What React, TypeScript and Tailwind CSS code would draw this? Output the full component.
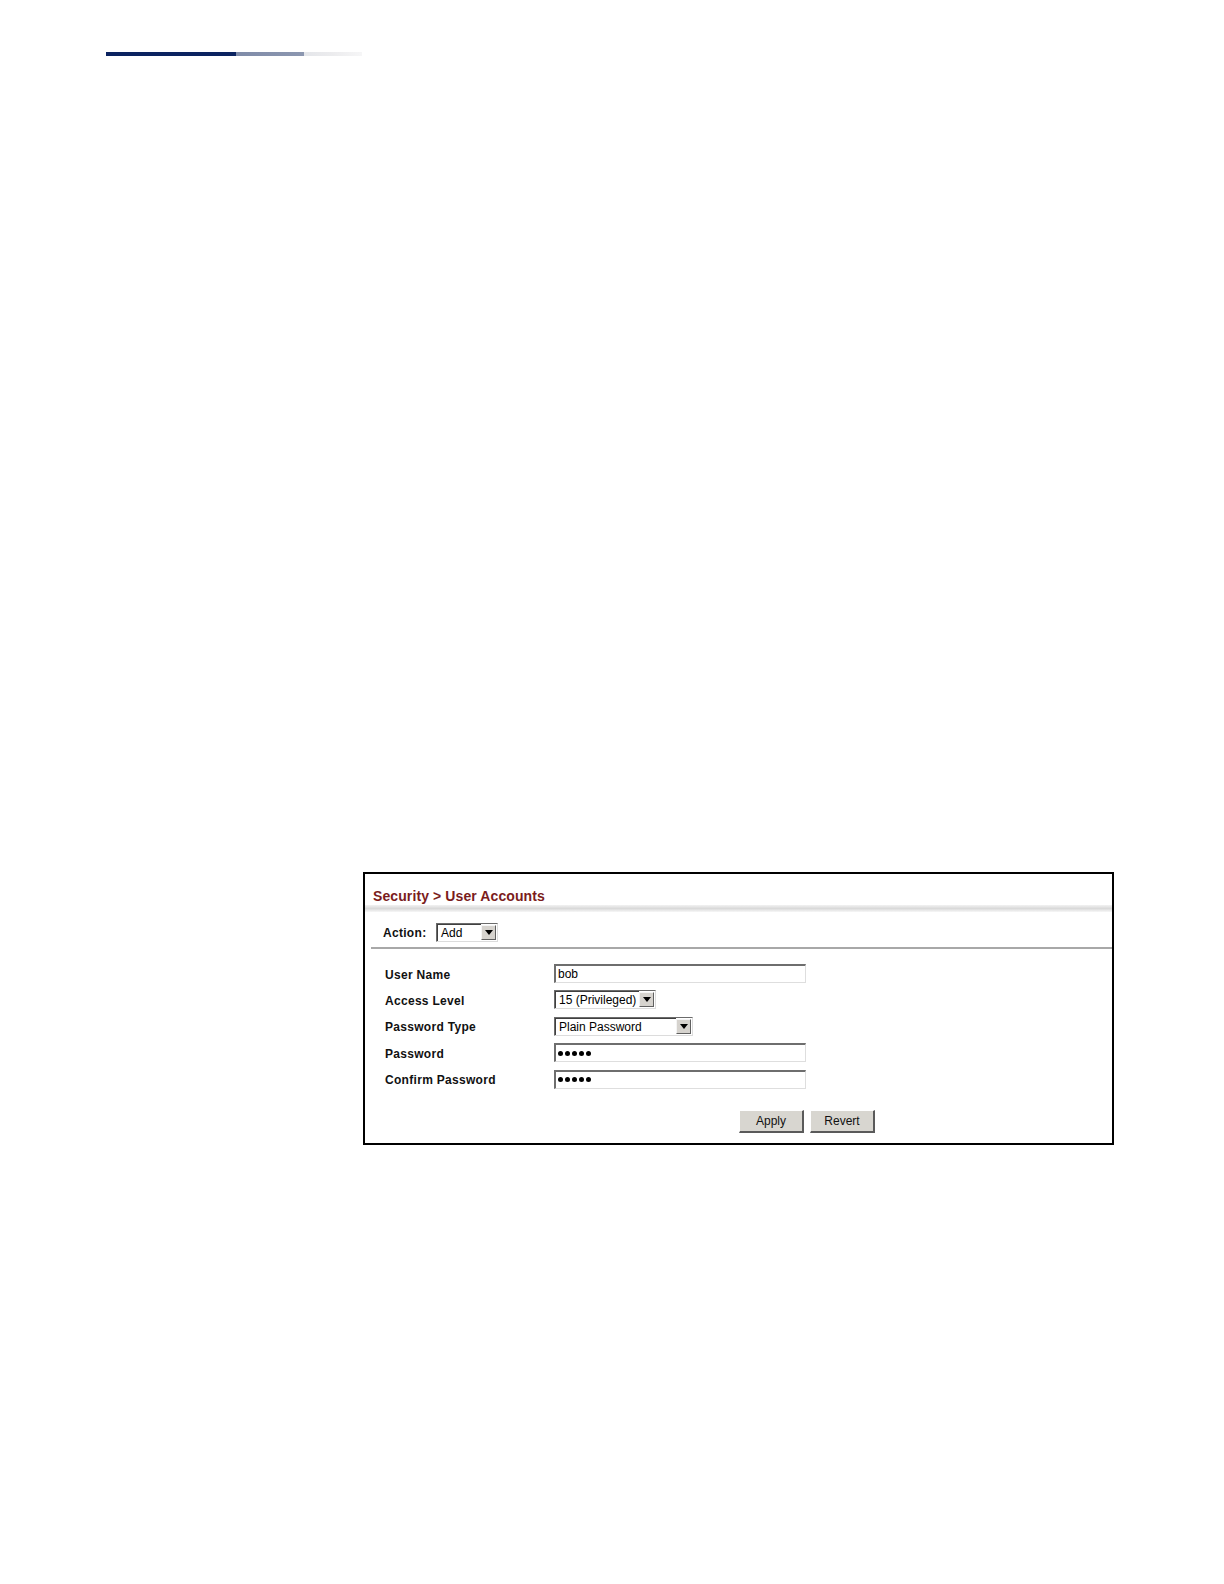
import React from 'react';

const font = { fontFamily: '"Liberation Sans", Arial, sans-serif' };

const Arrow = () => (
  <span className="flex h-full w-[15px] items-center justify-center border-t border-l border-t-[#f4f4f4] border-l-[#f4f4f4] border-r border-b border-r-[#606060] border-b-[#606060] bg-[#d6d3ce]">
    <svg width="8" height="5" viewBox="0 0 8 5">
      <path d="M0 0h8L4 5z" fill="#000" />
    </svg>
  </span>
);

const Select = ({ value, width }: { value: string; width: string }) => (
  <div
    className={`flex h-[19px] items-stretch border-t border-l border-t-[#6b6b6b] border-l-[#6b6b6b] border-b border-r border-b-[#dcdcdc] border-r-[#dcdcdc] bg-white ${width}`}
  >
    <div className="flex flex-1 items-center border-t border-l border-t-[#404040] border-l-[#404040] pl-[3px] text-[12px] leading-none text-black">
      {value}
    </div>
    <div className="py-[1px] pr-[1px]">
      <Arrow />
    </div>
  </div>
);

const TextInput = ({ value, password }: { value: string; password?: boolean }) => (
  <div className="flex h-[19px] w-[252px] items-center border-t-2 border-l-2 border-t-[#6e6e6e] border-l-[#6e6e6e] border-b border-r border-b-[#dedede] border-r-[#dedede] bg-white pl-[2px] text-[12px] leading-none text-black">
    {password ? (
      <span className="flex gap-[2px]">
        {[0, 1, 2, 3, 4].map((i) => (
          <span key={i} className="h-[5px] w-[5px] rounded-full bg-black" />
        ))}
      </span>
    ) : (
      value
    )}
  </div>
);

const Button = ({ label }: { label: string }) => (
  <button className="h-[23px] w-[65px] border-t border-l border-t-[#ffffff] border-l-[#ffffff] border-r-2 border-b-2 border-r-[#5a5a5a] border-b-[#5a5a5a] bg-[#d8d6d0] text-[12px] text-[#111]">
    {label}
  </button>
);

const rows: { label: string; field: React.ReactNode }[] = [
  { label: 'User Name', field: <TextInput value="bob" /> },
  { label: 'Access Level', field: <Select value="15 (Privileged)" width="w-[102px]" /> },
  { label: 'Password Type', field: <Select value="Plain Password" width="w-[139px]" /> },
  { label: 'Password', field: <TextInput value="" password /> },
  { label: 'Confirm Password', field: <TextInput value="" password /> },
];

export default function App() {
  return (
    <div className="min-h-[1584px] w-full bg-white" style={font}>
      {/* page header rule */}
      <div className="pt-[52px] pl-[106px]">
        <div className="flex h-[4px] w-[256px]">
          <div className="w-[130px] bg-[#0b2360]" />
          <div className="w-[68px] bg-gradient-to-r from-[#7f8ba8] to-[#8c97b0]" />
          <div className="w-[58px] bg-gradient-to-r from-[#e4e6ea] via-[#ececee] to-[#f6f6f7]" />
        </div>
      </div>

      {/* screenshot panel */}
      <div className="mt-[816px] ml-[363px] h-[273px] w-[751px] border-2 border-black">
        <div className="h-[31px] pt-[14px] pl-[8px] text-[14px] font-bold leading-[16px] tracking-[0.1px] text-[#7b1c1c]">
          Security &gt; User Accounts
        </div>
        <div className="h-[7px] bg-gradient-to-b from-[#f2f2f2] via-[#d9d9d9] to-[#f7f7f7]" />

        <div className="flex items-center pt-[11px] pl-[18px]">
          <span className="w-[53px] pt-[1px] text-[12px] font-bold tracking-[0.3px] text-[#111]">Action:</span>
          <Select value="Add" width="w-[62px]" />
        </div>
        <div className="mt-[5px] ml-[6px] h-[2px] bg-[#a8a8a8]" />

        <div className="flex flex-col gap-[7.4px] pt-[15px] pl-[20px]">
          {rows.map((r) => (
            <div key={r.label} className="flex h-[19px] items-center">
              <span className="w-[169px] pt-[2px] text-[12px] font-bold tracking-[0.3px] text-[#111]">{r.label}</span>
              {r.field}
            </div>
          ))}
        </div>

        <div className="flex gap-[6px] pt-[21px] pl-[374px]">
          <Button label="Apply" />
          <Button label="Revert" />
        </div>
      </div>
    </div>
  );
}
